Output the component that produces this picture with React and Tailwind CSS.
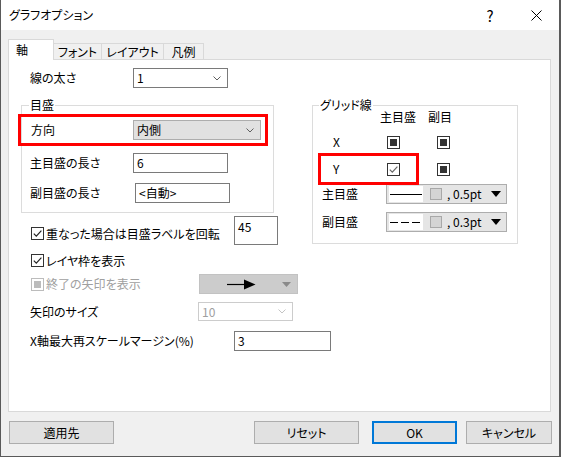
import React from 'react';

const selectStyles = {
  white: 'bg-white border-[#7a7a7a] text-black',
  gray: 'bg-[#e1e1e1] border-[#adadad] text-black',
  disabled: 'bg-white border-[#cccccc] text-[#a0a0a0]',
};

function Chevron({ color = '#606060' }) {
  return (
    <svg width="8" height="5" viewBox="0 0 8 5">
      <path d="M0.5 0.5 L4 4 L7.5 0.5" fill="none" stroke={color} strokeWidth="1" />
    </svg>
  );
}

function Select({ size, value, variant = 'white' }) {
  const chev = variant === 'disabled' ? '#c4c4c4' : '#606060';
  return (
    <div className={`${size} ${selectStyles[variant]} border flex items-center pl-[3px] pr-[6px] shrink-0`}>
      <span>{value}</span>
      <span className="ml-auto flex">
        <Chevron color={chev} />
      </span>
    </div>
  );
}

function TextBox({ size, value, tall }) {
  return (
    <div className={`${size} border border-[#7a7a7a] bg-white flex pl-[3px] shrink-0 ${tall ? 'items-start pt-[4px]' : 'items-center'}`}>
      {value}
    </div>
  );
}

function Check({ kind }) {
  if (kind === 'mixed') {
    return (
      <div className="w-[13px] h-[13px] border border-[#333333] bg-white flex items-center justify-center shrink-0">
        <div className="w-[7px] h-[7px] bg-[#333333]" />
      </div>
    );
  }
  if (kind === 'disabled') {
    return (
      <div className="w-[13px] h-[13px] border border-[#bcbcbc] bg-white flex items-center justify-center shrink-0">
        <div className="w-[7px] h-[7px] bg-[#bcbcbc]" />
      </div>
    );
  }
  const stroke = kind === 'light' ? '#666666' : '#222222';
  return (
    <div className="w-[13px] h-[13px] border border-[#333333] bg-white flex items-center justify-center shrink-0">
      <svg width="11" height="11" viewBox="0 0 11 11">
        <path d="M1.8 5.6 L4.3 8.1 L9.4 2.6" fill="none" stroke={stroke} strokeWidth="1.2" />
      </svg>
    </div>
  );
}

function LineSelect({ dashed, value }) {
  return (
    <div className="w-[121px] h-[20px] border border-[#adadad] bg-[#e5e5e5] flex items-center shrink-0">
      <div className="ml-[2px] w-[34px] h-[16px] bg-white flex items-center">
        <svg width="34" height="3" viewBox="0 0 34 3">
          <line x1="1" y1="1.5" x2="33" y2="1.5" stroke="#000" strokeWidth="1" strokeDasharray={dashed ? '8 3' : undefined} />
        </svg>
      </div>
      <div className="ml-[7px] w-[12px] h-[12px] border border-[#a8a8a8] bg-[#d4d4d4]" />
      <span className="ml-[5px]">, {value}</span>
      <span className="ml-auto mr-[5px] flex">
        <svg width="10" height="6" viewBox="0 0 10 6">
          <path d="M0 0 L10 0 L5 6 Z" fill="#000" />
        </svg>
      </span>
    </div>
  );
}

function Button({ label, className }) {
  return (
    <div className={`h-[23px] bg-[#e1e1e1] flex items-center justify-center shrink-0 ${className}`}>
      {label}
    </div>
  );
}

export default function App() {
  return (
    <div className="w-[561px] h-[457px] bg-[#f0f0f0] border-l border-r-2 border-b border-[#5a5a5a] flex flex-col text-[12px] leading-none text-black font-['Noto_Sans_CJK_JP',sans-serif] [font-feature-settings:'palt'] overflow-hidden">
      {/* title bar */}
      <div className="h-[30px] bg-white flex items-center pl-[8px] shrink-0">
        <span>グラフオプション</span>
        <span className="ml-auto w-[46px] flex justify-center text-[15px]">?</span>
        <span className="w-[46px] flex justify-center">
          <svg width="11" height="11" viewBox="0 0 11 11">
            <path d="M0.5 0.5 L10.5 10.5 M10.5 0.5 L0.5 10.5" stroke="#000" strokeWidth="1" />
          </svg>
        </span>
      </div>

      {/* tabs */}
      <div className="mt-[9px] h-[20px] flex items-end pl-[7px] shrink-0">
        <div className="w-[46px] h-[21px] -mb-px bg-white border border-b-0 border-[#d9d9d9] relative z-10 flex items-center pl-[7px]">軸</div>
        <div className="w-[49px] h-[16px] -ml-px bg-[#f0f0f0] border border-b-0 border-[#d9d9d9] flex items-center justify-center">フォント</div>
        <div className="w-[63px] h-[16px] -ml-px bg-[#f0f0f0] border border-b-0 border-[#d9d9d9] flex items-center justify-center">レイアウト</div>
        <div className="w-[41px] h-[16px] -ml-px bg-[#f0f0f0] border border-b-0 border-[#d9d9d9] flex items-center justify-center">凡例</div>
      </div>

      {/* panel */}
      <div className="ml-[7px] w-[543px] h-[353px] bg-white border border-[#d9d9d9] relative flex shrink-0">
        {/* left column */}
        <div className="w-[303px] shrink-0 flex flex-col">
          <div className="mt-[8px] h-[20px] flex items-center pl-[21px]">
            <span className="w-[103px] shrink-0">線の太さ</span>
            <Select size="w-[95px] h-[20px]" value="1" />
          </div>

          <div className="mt-[17px] ml-[12px] w-[253px] h-[108px] border border-[#dcdcdc] relative flex flex-col shrink-0">
            <span className="absolute left-[7px] -top-[7px] bg-white px-[1px]">目盛</span>
            <div className="mt-[14px] h-[20px] flex items-center pl-[9px]">
              <span className="w-[102px] shrink-0">方向</span>
              <Select size="w-[128px] h-[20px]" value="内側" variant="gray" />
            </div>
            <div className="mt-[13px] h-[20px] flex items-center pl-[8px]">
              <span className="w-[103px] shrink-0">主目盛の長さ</span>
              <TextBox size="w-[95px] h-[20px]" value="6" />
            </div>
            <div className="mt-[10px] h-[20px] flex items-center pl-[8px]">
              <span className="w-[105px] shrink-0">副目盛の長さ</span>
              <TextBox size="w-[95px] h-[20px]" value="<自動>" />
            </div>
          </div>

          <div className="mt-[3px] flex items-start pl-[22px]">
            <div className="w-[203px] mt-[11px] flex items-center shrink-0">
              <Check kind="checked" />
              <span className="ml-[2px]">重なった場合は目盛ラベルを回転</span>
            </div>
            <TextBox size="w-[44px] h-[29px]" value="45" tall />
          </div>

          <div className="mt-[9px] h-[13px] flex items-center pl-[22px]">
            <Check kind="checked" />
            <span className="ml-[2px]">レイヤ枠を表示</span>
          </div>

          <div className="mt-[7px] h-[20px] flex items-center pl-[22px]">
            <div className="w-[168px] flex items-center shrink-0">
              <Check kind="disabled" />
              <span className="ml-[2px] text-[#a0a0a0]">終了の矢印を表示</span>
            </div>
            <div className="w-[99px] h-[20px] bg-[#cccccc] border border-[#c2c2c2] flex items-center shrink-0">
              <svg className="ml-[27px]" width="29" height="11" viewBox="0 0 29 11">
                <line x1="0" y1="5.5" x2="19" y2="5.5" stroke="#000" strokeWidth="1.2" />
                <path d="M17 0.5 L28.5 5.5 L17 10.5 Z" fill="#000" />
              </svg>
              <svg className="ml-auto mr-[6px]" width="9" height="5" viewBox="0 0 9 5">
                <path d="M0 0 L9 0 L4.5 5 Z" fill="#8a8a8a" />
              </svg>
            </div>
          </div>

          <div className="mt-[8px] h-[19px] flex items-center pl-[21px]">
            <span className="w-[168px] shrink-0">矢印のサイズ</span>
            <Select size="w-[95px] h-[19px]" value="10" variant="disabled" />
          </div>

          <div className="mt-[10px] h-[20px] flex items-center pl-[21px]">
            <span className="w-[204px] shrink-0">X軸最大再スケールマージン(%)</span>
            <TextBox size="w-[97px] h-[20px]" value="3" />
          </div>
        </div>

        {/* right column: grid lines */}
        <div className="mt-[45px] w-[206px] h-[139px] border border-[#dcdcdc] relative flex flex-col shrink-0">
          <span className="absolute left-[6px] -top-[7px] bg-white px-[1px]">グリッド線</span>
          <div className="mt-[3px] h-[16px] flex items-center pl-[67px]">
            <span className="w-[48px] shrink-0">主目盛</span>
            <span>副目</span>
          </div>
          <div className="mt-[7px] h-[20px] flex items-center pl-[20px]">
            <span className="w-[54px] shrink-0">X</span>
            <Check kind="mixed" />
            <span className="ml-[37px] flex">
              <Check kind="mixed" />
            </span>
          </div>
          <div className="mt-[7px] h-[20px] flex items-center pl-[20px]">
            <span className="w-[54px] shrink-0">Y</span>
            <Check kind="light" />
            <span className="ml-[37px] flex">
              <Check kind="mixed" />
            </span>
          </div>
          <div className="mt-[5px] h-[20px] flex items-center pl-[9px]">
            <span className="w-[64px] shrink-0">主目盛</span>
            <LineSelect value="0.5pt" />
          </div>
          <div className="mt-[8px] h-[20px] flex items-center pl-[9px]">
            <span className="w-[64px] shrink-0">副目盛</span>
            <LineSelect value="0.3pt" dashed />
          </div>
        </div>

        {/* red highlight boxes */}
        <div className="absolute left-[9px] top-[54px] w-[250px] h-[32px] border-[3px] border-[#ff0000] pointer-events-none" />
        <div className="absolute left-[309px] top-[93px] w-[101px] h-[32px] border-[3px] border-[#ff0000] pointer-events-none" />
      </div>

      {/* buttons */}
      <div className="mt-[9px] flex items-center shrink-0">
        <Button label="適用先" className="ml-[8px] w-[105px] border border-[#adadad]" />
        <Button label="リセット" className="ml-[140px] w-[105px] border border-[#adadad]" />
        <Button label="OK" className="ml-[13px] w-[85px] border-2 border-[#0078d7]" />
        <Button label="キャンセル" className="ml-[9px] w-[86px] border border-[#adadad]" />
      </div>
    </div>
  );
}
